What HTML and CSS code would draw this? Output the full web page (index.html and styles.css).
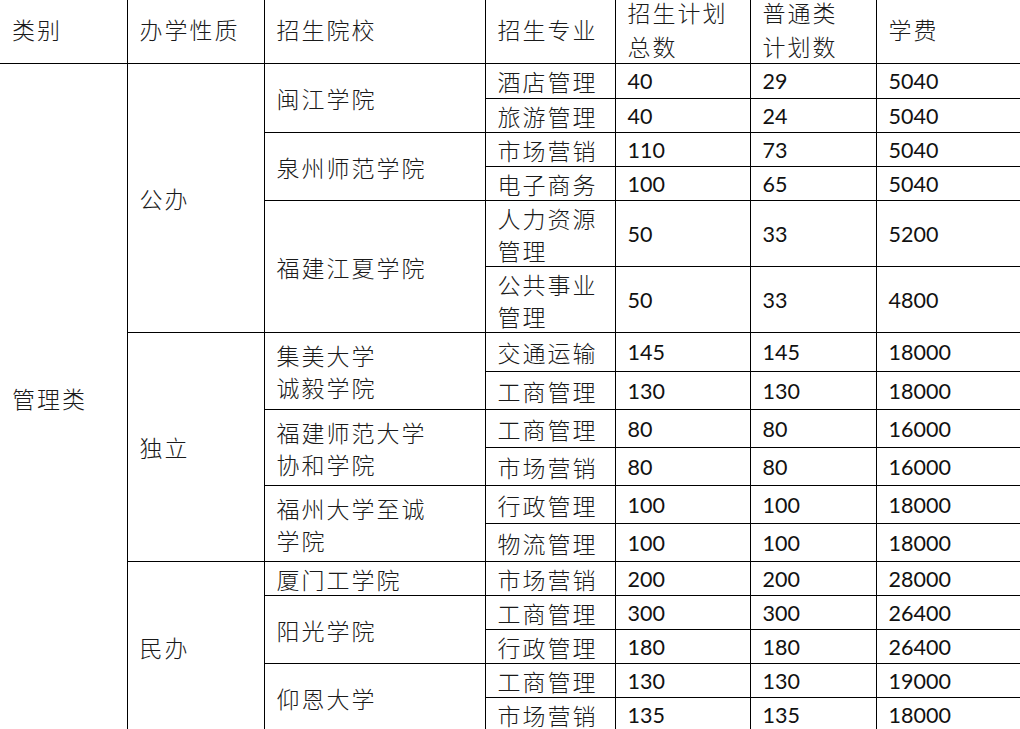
FILE: index.html
```html
<!DOCTYPE html>
<html lang="zh-CN">
<head>
<meta charset="utf-8">
<title>管理类招生计划</title>
<link rel="stylesheet" href="styles.css">
</head>
<body>
<table class="plan">
  <colgroup>
    <col class="c1"><col class="c2"><col class="c3"><col class="c4"><col class="c5"><col class="c6"><col class="c7">
  </colgroup>
  <thead>
    <tr class="h-head">
      <th class="first">类别</th>
      <th>办学性质</th>
      <th>招生院校</th>
      <th>招生专业</th>
      <th>招生计划<br>总数</th>
      <th>普通类<br>计划数</th>
      <th>学费</th>
    </tr>
  </thead>
  <tbody>
    <tr class="h35">
      <td class="first" rowspan="17">管理类</td>
      <td rowspan="6">公办</td>
      <td rowspan="2">闽江学院</td>
      <td>酒店管理</td><td class="num">40</td><td class="num">29</td><td class="num">5040</td>
    </tr>
    <tr class="h34"><td>旅游管理</td><td class="num">40</td><td class="num">24</td><td class="num">5040</td></tr>
    <tr class="h34">
      <td rowspan="2">泉州师范学院</td>
      <td>市场营销</td><td class="num">110</td><td class="num">73</td><td class="num">5040</td>
    </tr>
    <tr class="h34"><td>电子商务</td><td class="num">100</td><td class="num">65</td><td class="num">5040</td></tr>
    <tr class="h66">
      <td rowspan="2">福建江夏学院</td>
      <td class="two">人力资源<br>管理</td><td class="num">50</td><td class="num">33</td><td class="num">5200</td>
    </tr>
    <tr class="h66"><td class="two">公共事业<br>管理</td><td class="num">50</td><td class="num">33</td><td class="num">4800</td></tr>
    <tr class="h39">
      <td rowspan="6">独立</td>
      <td rowspan="2" class="two">集美大学<br>诚毅学院</td>
      <td>交通运输</td><td class="num">145</td><td class="num">145</td><td class="num">18000</td>
    </tr>
    <tr class="h38"><td>工商管理</td><td class="num">130</td><td class="num">130</td><td class="num">18000</td></tr>
    <tr class="h38">
      <td rowspan="2" class="two">福建师范大学<br>协和学院</td>
      <td>工商管理</td><td class="num">80</td><td class="num">80</td><td class="num">16000</td>
    </tr>
    <tr class="h38"><td>市场营销</td><td class="num">80</td><td class="num">80</td><td class="num">16000</td></tr>
    <tr class="h38">
      <td rowspan="2" class="two">福州大学至诚<br>学院</td>
      <td>行政管理</td><td class="num">100</td><td class="num">100</td><td class="num">18000</td>
    </tr>
    <tr class="h38"><td>物流管理</td><td class="num">100</td><td class="num">100</td><td class="num">18000</td></tr>
    <tr class="h34">
      <td rowspan="5">民办</td>
      <td>厦门工学院</td>
      <td>市场营销</td><td class="num">200</td><td class="num">200</td><td class="num">28000</td>
    </tr>
    <tr class="h34">
      <td rowspan="2">阳光学院</td>
      <td>工商管理</td><td class="num">300</td><td class="num">300</td><td class="num">26400</td>
    </tr>
    <tr class="h34"><td>行政管理</td><td class="num">180</td><td class="num">180</td><td class="num">26400</td></tr>
    <tr class="h34">
      <td rowspan="2">仰恩大学</td>
      <td>工商管理</td><td class="num">130</td><td class="num">130</td><td class="num">19000</td>
    </tr>
    <tr class="h34"><td>市场营销</td><td class="num">135</td><td class="num">135</td><td class="num">18000</td></tr>
  </tbody>
</table>
</body>
</html>
```
FILE: styles.css
```css
html, body {
  margin: 0;
  padding: 0;
  background: #ffffff;
  overflow: hidden;
}

.plan {
  border-collapse: collapse;
  table-layout: fixed;
  width: 1060px;
  margin-top: -5px;
  border: none;
  font-family: "Noto Sans CJK SC", "Noto Sans", sans-serif;
  font-size: 23px;
  letter-spacing: 2px;
  color: #1a1a1a;
}

.c1 { width: 127px; }
.c2 { width: 137px; }
.c3 { width: 221px; }
.c4 { width: 130px; }
.c5 { width: 135px; }
.c6 { width: 126px; }
.c7 { width: 184px; }

.plan th,
.plan td {
  border: 1px solid #000;
  padding: 0 10px 0 12px;
  text-align: left;
  vertical-align: middle;
  font-weight: 300;
  line-height: 30px;
  white-space: nowrap;
  overflow: hidden;
}

.plan thead th {
  border-top: none;
  line-height: 34px;
}

.plan .first {
  border-left: none;
}

.plan tr > :last-child {
  border-right: none;
}

.plan td.num {
  font-family: "Lato", "Liberation Sans", sans-serif;
  font-size: 21.5px;
  letter-spacing: 0;
  color: #111;
  font-weight: 400;
}

.plan td.two {
  line-height: 32px;
}

.h-head { height: 68px; }
.h35 { height: 35px; }
.h34 { height: 34px; }
.h66 { height: 66px; }
.h39 { height: 39px; }
.h38 { height: 38px; }
```
